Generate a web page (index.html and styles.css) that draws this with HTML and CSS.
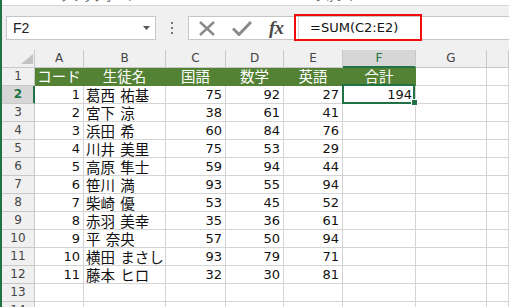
FILE: index.html
```html
<!DOCTYPE html>
<html lang="ja">
<head>
  <meta charset="UTF-8">
  <title>SUM</title>
  <link rel="stylesheet" href="styles.css">
</head>
<body>
<div class="app">
  <!-- リボン下端（切れている） -->
  <div class="ribbon">
    <span class="r1">クリップボード</span>
    <span class="r2">▫</span>
    <span class="r3">フォント</span>
    <span class="r4">▫</span>
  </div>

  <!-- 数式バー -->
  <div class="fbar">
    <div class="namebox">
      <span>F2</span>
      <svg width="7" height="4" viewBox="0 0 7 4"><path d="M0 0h7L3.5 4z" fill="#555"/></svg>
    </div>
    <div class="grip">
      <svg width="2" height="12" viewBox="0 0 2 12"><rect y="0" width="2" height="2" fill="#777"/><rect y="5" width="2" height="2" fill="#777"/><rect y="10" width="2" height="2" fill="#777"/></svg>
    </div>
    <div class="fwrap">
      <div class="slot s1">
        <svg width="18" height="15" viewBox="0 0 18 15"><path d="M2 1L16 14M16 1L2 14" stroke="#8a8a8a" stroke-width="2.4" fill="none"/></svg>
      </div>
      <div class="slot s2">
        <svg width="20" height="15" viewBox="0 0 20 15"><path d="M1 7.5L7 13.5L19 1" stroke="#8a8a8a" stroke-width="3" fill="none"/></svg>
      </div>
      <div class="slot s3"><span class="fx">fx</span></div>
      <div class="finput">
        <div class="ftext">=SUM(C2:E2)</div>
        <div class="callout"></div>
      </div>
    </div>
  </div>

  <!-- シート -->
  <div class="sheet">
    <div class="corner"><svg width="12" height="10" viewBox="0 0 12 10"><path d="M12 0V10H0z" fill="#c2c2c2"/></svg></div>
    <div class="hd">A</div><div class="hd">B</div><div class="hd">C</div><div class="hd">D</div><div class="hd">E</div><div class="hd sel">F</div><div class="hd">G</div><div class="hd"></div>

    <div class="rh">1</div>
    <div class="c g">コード</div><div class="c g">生徒名</div><div class="c g">国語</div><div class="c g">数学</div><div class="c g">英語</div><div class="c g">合計</div><div class="c"></div><div class="c"></div>

    <div class="rh sel">2</div>
    <div class="c n">1</div><div class="c t">葛西 祐基</div><div class="c n">75</div><div class="c n">92</div><div class="c n">27</div><div class="c n sel">194<span class="handle"></span></div><div class="c"></div><div class="c"></div>

    <div class="rh">3</div>
    <div class="c n">2</div><div class="c t">宮下 涼</div><div class="c n">38</div><div class="c n">61</div><div class="c n">41</div><div class="c"></div><div class="c"></div><div class="c"></div>

    <div class="rh">4</div>
    <div class="c n">3</div><div class="c t">浜田 希</div><div class="c n">60</div><div class="c n">84</div><div class="c n">76</div><div class="c"></div><div class="c"></div><div class="c"></div>

    <div class="rh">5</div>
    <div class="c n">4</div><div class="c t">川井 美里</div><div class="c n">75</div><div class="c n">53</div><div class="c n">29</div><div class="c"></div><div class="c"></div><div class="c"></div>

    <div class="rh">6</div>
    <div class="c n">5</div><div class="c t">高原 隼士</div><div class="c n">59</div><div class="c n">94</div><div class="c n">44</div><div class="c"></div><div class="c"></div><div class="c"></div>

    <div class="rh">7</div>
    <div class="c n">6</div><div class="c t">笹川 満</div><div class="c n">93</div><div class="c n">55</div><div class="c n">94</div><div class="c"></div><div class="c"></div><div class="c"></div>

    <div class="rh">8</div>
    <div class="c n">7</div><div class="c t">柴崎 優</div><div class="c n">53</div><div class="c n">45</div><div class="c n">52</div><div class="c"></div><div class="c"></div><div class="c"></div>

    <div class="rh">9</div>
    <div class="c n">8</div><div class="c t">赤羽 美幸</div><div class="c n">35</div><div class="c n">36</div><div class="c n">61</div><div class="c"></div><div class="c"></div><div class="c"></div>

    <div class="rh">10</div>
    <div class="c n">9</div><div class="c t">平 奈央</div><div class="c n">57</div><div class="c n">50</div><div class="c n">94</div><div class="c"></div><div class="c"></div><div class="c"></div>

    <div class="rh">11</div>
    <div class="c n">10</div><div class="c t">横田 まさし</div><div class="c n">93</div><div class="c n">79</div><div class="c n">71</div><div class="c"></div><div class="c"></div><div class="c"></div>

    <div class="rh">12</div>
    <div class="c n">11</div><div class="c t">藤本 ヒロ</div><div class="c n">32</div><div class="c n">30</div><div class="c n">81</div><div class="c"></div><div class="c"></div><div class="c"></div>

    <div class="rh">13</div>
    <div class="c"></div><div class="c"></div><div class="c"></div><div class="c"></div><div class="c"></div><div class="c"></div><div class="c"></div><div class="c"></div>

    <div class="rh">14</div>
    <div class="c"></div><div class="c"></div><div class="c"></div><div class="c"></div><div class="c"></div><div class="c"></div><div class="c"></div><div class="c"></div>
  </div>
</div>
</body>
</html>
```

FILE: styles.css
```css
:root {
  --xl-green: #217346;
  --head-green: #548235;
  --grid-line: #d4d4d4;
  --head-line: #c8c8c8;
  --bar-bg: #f0f0f0;
  --sel-bg: #d6d6d6;
}
* {
  box-sizing: border-box;
}
body {
  margin: 0;
  font-family: "Liberation Sans", "Noto Sans CJK JP", sans-serif;
  color: #222;
}
.app {
  height: 307px;
  overflow: hidden;
  border-left: 2px solid var(--xl-green);
  background: var(--bar-bg);
  display: flex;
  flex-direction: column;
}
/* リボン */
.ribbon {
  height: 6px;
  flex-shrink: 0;
  background: #fff;
  border-bottom: 1px solid #d5d5d5;
  overflow: hidden;
  display: flex;
  font-family: "Noto Sans CJK JP", sans-serif;
  font-size: 11px;
  line-height: 14px;
  color: #555;
}
.ribbon span {
  margin-top: -11px;
}
.r1 { margin-left: 58px; }
.r2 { margin-left: 66px; }
.r3 { margin-left: 100px; }
.r4 { margin-left: 90px; }
/* 数式バー */
.fbar {
  height: 44px;
  flex-shrink: 0;
  padding: 10px 0 0 4px;
  display: flex;
  align-items: flex-start;
}
.namebox {
  width: 150px;
  height: 24px;
  border: 1px solid #c6c6c6;
  background: #fff;
  display: flex;
  align-items: center;
  justify-content: space-between;
  padding: 0 5px 0 6px;
  font-size: 14px;
  color: #222;
}
.grip {
  width: 32px;
  height: 24px;
  display: flex;
  align-items: center;
  justify-content: center;
}
.fwrap {
  flex: 1;
  height: 24px;
  border: 1px solid #c6c6c6;
  border-right: none;
  background: #fff;
  display: flex;
}
.slot {
  display: flex;
  align-items: center;
  justify-content: center;
}
.s1 { width: 35px; }
.s2 { width: 36px; }
.s3 { width: 32px; }
.fx {
  font-family: "Liberation Serif", serif;
  font-style: italic;
  font-weight: bold;
  font-size: 19px;
  color: #4a4a4a;
  letter-spacing: -1px;
  margin-top: -1px;
}
.finput {
  flex: 1;
  position: relative;
  display: flex;
}
.ftext {
  margin-left: 6px;
  border-left: 1px solid #d8d8d8;
  padding-left: 11px;
  font-family: "DejaVu Sans", sans-serif;
  font-size: 13px;
  line-height: 22px;
  color: #111;
}
.callout {
  position: absolute;
  left: 2px;
  top: -3px;
  width: 128px;
  height: 27px;
  border: 2px solid #f20c0c;
}
/* シート */
.sheet {
  flex: 1;
  background: #fff;
  display: grid;
  grid-template-columns: 33px 49px 82px 60px 58px 59px 73px 71px 1fr;
  grid-auto-rows: 18px;
}
.corner,
.hd,
.rh {
  background: var(--bar-bg);
  border-right: 1px solid var(--head-line);
  border-bottom: 1px solid var(--head-line);
  font-family: "DejaVu Sans", sans-serif;
  font-size: 12px;
  color: #444;
  text-align: center;
  line-height: 17px;
}
.corner {
  display: flex;
  align-items: flex-end;
  justify-content: flex-end;
  padding: 0 1px 3px 0;
}
.hd.sel {
  background: var(--sel-bg);
  color: var(--xl-green);
  border-bottom: 2px solid var(--xl-green);
}
.rh.sel {
  background: var(--sel-bg);
  color: var(--xl-green);
  font-weight: bold;
  border-right-color: var(--xl-green);
  box-shadow: inset -1px 0 var(--xl-green);
}
.c {
  border-right: 1px solid var(--grid-line);
  border-bottom: 1px solid var(--grid-line);
  line-height: 17px;
  white-space: nowrap;
}
.c.g {
  background: var(--head-green);
  border-color: var(--head-green);
  color: #fff;
  text-align: center;
  font-family: "Noto Sans CJK JP", sans-serif;
  font-size: 14.5px;
  line-height: 16px;
}
.c.t {
  padding-left: 2px;
  font-family: "Noto Sans CJK JP", sans-serif;
  font-size: 14.5px;
  line-height: 16px;
  padding-top: 1px;
  word-spacing: 2px;
  color: #111;
}
.c.n {
  text-align: right;
  padding-right: 3px;
  font-family: "DejaVu Sans", sans-serif;
  font-size: 13px;
  color: #111;
}
.c.sel {
  position: relative;
}
.c.sel::after {
  content: "";
  position: absolute;
  left: -1px;
  top: -2px;
  right: 0;
  bottom: -1px;
  border: 2px solid var(--xl-green);
}
.handle {
  position: absolute;
  right: -3px;
  bottom: -3px;
  width: 7px;
  height: 7px;
  background: var(--xl-green);
  border: 1px solid #fff;
  z-index: 1;
}
```
